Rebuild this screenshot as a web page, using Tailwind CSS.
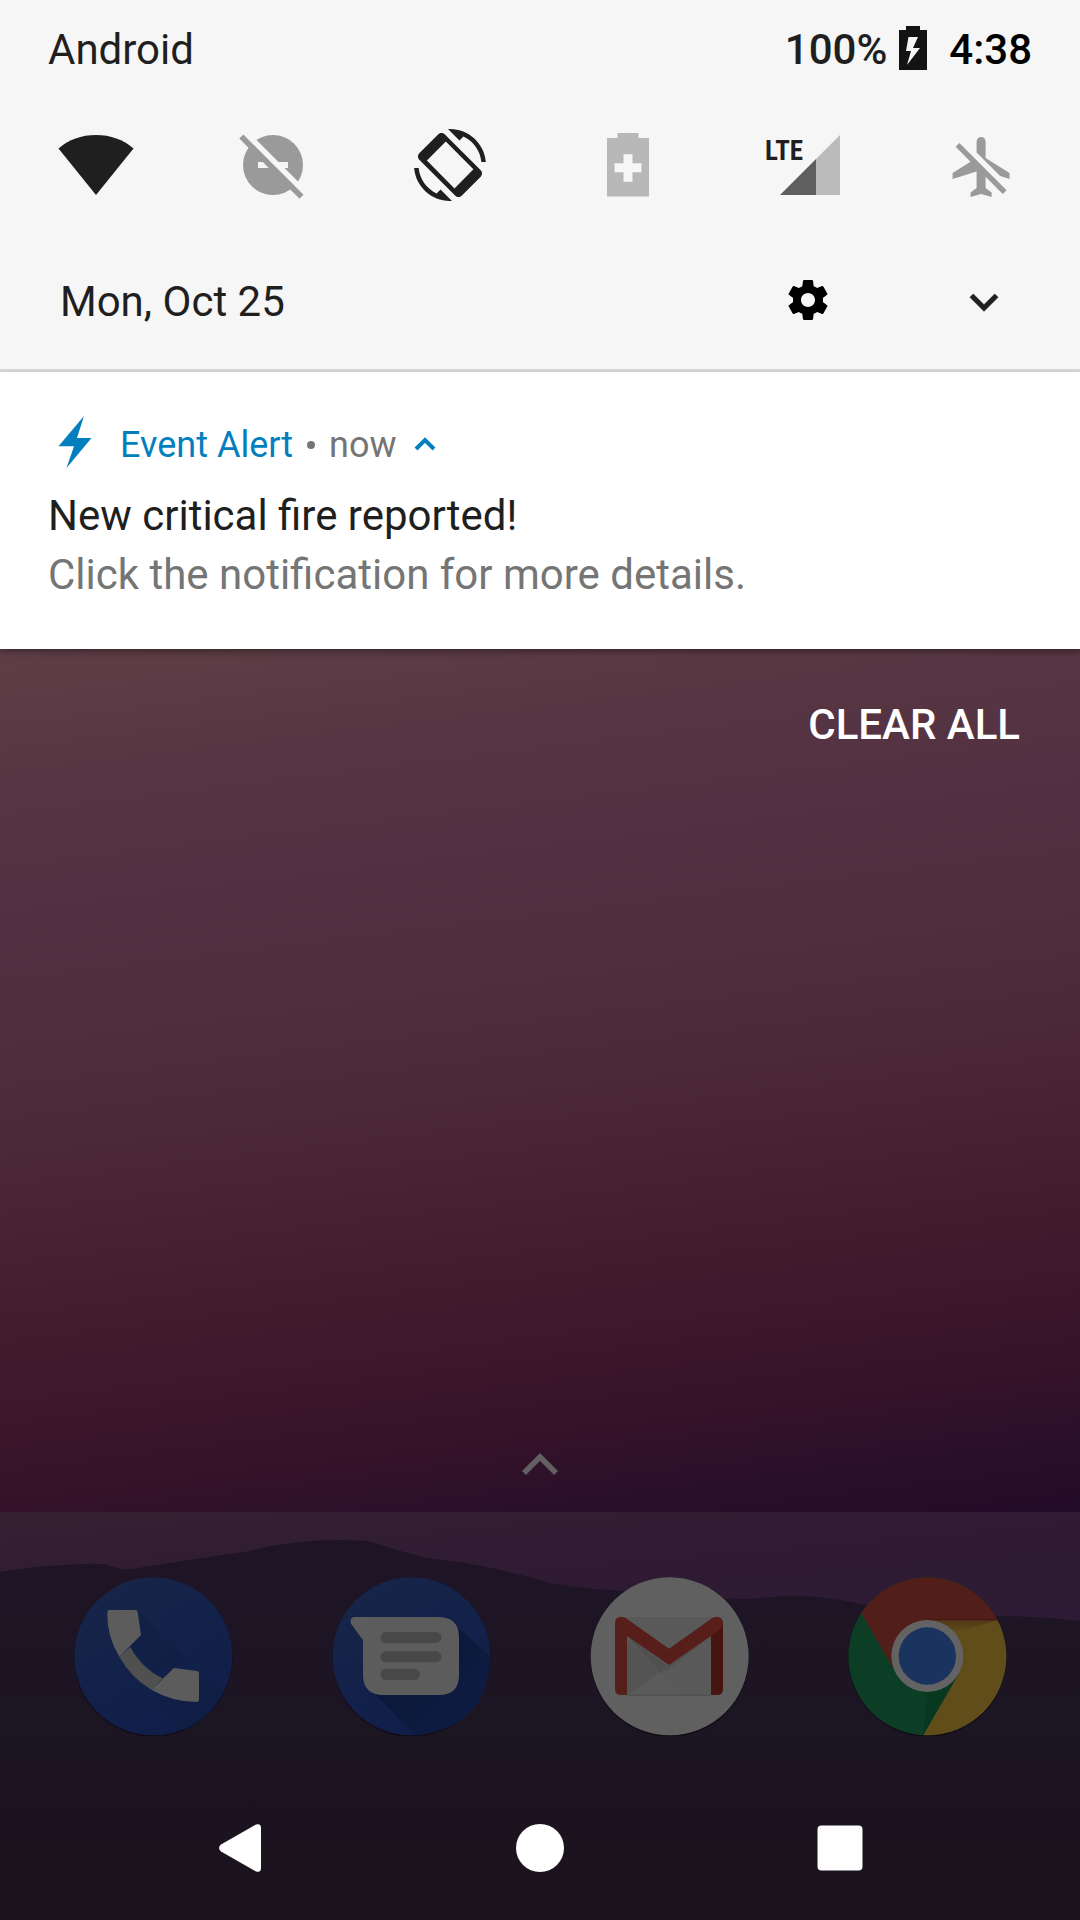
<!DOCTYPE html>
<html lang="en">
<head>
<meta charset="utf-8">
<meta name="viewport" content="width=device-width, initial-scale=1">
<title>Notification shade</title>
<script src="https://cdn.jsdelivr.net/npm/@tailwindcss/browser@4"></script>
</head>
<body class="flex min-h-screen flex-col bg-[#1b131f] font-[Roboto,sans-serif] text-[42px] leading-[48px] text-[#1f1f1f]">

  <!-- Quick settings panel -->
  <header class="border-b-3 border-[#dadada] bg-[#f6f6f6] pt-[26px] pb-[42px]">
    <div class="flex items-center justify-between px-12">
      <span>Android</span>
      <div class="flex items-center font-medium">
        <span>100%</span>
        <svg class="mr-[22px] ml-3 h-12 w-7" viewBox="899 26 28 48" aria-label="Charging">
          <path fill="#131313" d="M906 26h14v4h7v40h-28V30h7z"/>
          <path fill="#f6f6f6" d="M908.500 37h9.500L913 48h7l-13 17 4-14h-5z"/>
        </svg>
        <time class="text-black">4:38</time>
      </div>
    </div>

    <div class="mt-[55px] flex justify-between pr-[61px] pl-[58px]">
      <button type="button" aria-label="Wi-Fi">
        <svg class="h-[72px] w-[76px]" viewBox="58 129 76 72"><path fill="#1f1f1f" d="M96 195 58.500 148.500Q74 135 96 135t37.500 13.500z"/></svg>
      </button>
      <button type="button" aria-label="Do not disturb">
        <svg class="h-[72px] w-[76px]" viewBox="235 129 76 72">
          <circle cx="273" cy="165" r="30" fill="#9a9a9a"/>
          <path fill="#f6f6f6" d="M258 162h30v6h-30zM243.500 135l4-4 60 60-4 4z"/>
          <path fill="#9a9a9a" d="M239.300 138.500l4-4 60.200 60.200-4 4z"/>
        </svg>
      </button>
      <button type="button" aria-label="Auto-rotate">
        <svg class="h-[72px] w-[76px]" viewBox="0 0 24 24"><path fill="#1f1f1f" fill-rule="evenodd" d="M16.480 2.520c3.270 1.550 5.610 4.720 5.970 8.480h1.500C23.440 4.840 18.290 0 12 0l-.66.03 3.810 3.810 1.330-1.320zm-6.250-.77c-.59-.59-1.540-.59-2.120 0L1.750 8.110c-.59.59-.59 1.540 0 2.120l12.020 12.020c.59.59 1.540.59 2.120 0l6.360-6.360c.59-.59.59-1.540 0-2.120L10.230 1.750zM10.600 4.200 4.300 10.500l9.200 9.300 6.300-6.400zM7.520 21.480C4.250 19.940 1.910 16.760 1.550 13H.05C.56 19.160 5.710 24 12 24l.66-.03-3.810-3.810-1.330 1.320z"/></svg>
      </button>
      <button type="button" aria-label="Battery saver">
        <svg class="h-[72px] w-[76px]" viewBox="589 129 76 72">
          <path fill="#b8b8b8" d="M617.500 133h21v5H649v58.500h-42V138h10.500z"/>
          <path fill="#f6f6f6" d="M623.500 154.300h9v9h9v9h-9v9.400h-9v-9.400h-9v-9h9z"/>
        </svg>
      </button>
      <button type="button" aria-label="Mobile data">
        <svg class="h-[72px] w-[76px]" viewBox="766 129 76 72">
          <path fill="#bbbbbb" d="M840 135v60h-24v-36z"/>
          <path fill="#5f5f5f" d="M816 159v36h-36z"/>
          <text x="765" y="160" font-size="27" font-weight="700" font-family="'Liberation Sans Narrow','Roboto Condensed',Roboto,sans-serif" fill="#1f1f1f">LTE</text>
        </svg>
      </button>
      <button type="button" aria-label="Airplane mode">
        <svg class="h-[72px] w-[76px]" viewBox="943 129 76 72"><path transform="translate(946.600 131) scale(3)" fill="#9a9a9a" d="M13 9V3.500c0-.83-.67-1.500-1.500-1.500S10 2.670 10 3.500v3.680l7.830 7.830L21 16v-2l-8-5zM3 5.270l4.990 4.990L2 14v2l8-2.500V19l-2 1.500V22l3.500-1 3.500 1v-1.500L13 19v-3.730L18.730 21 20 19.730 4.270 4 3 5.270z"/></svg>
      </button>
    </div>

    <div class="mt-[76px] flex h-[50px] items-center pr-[68px] pl-[60px]">
      <time class="flex-1">Mon, Oct 25</time>
      <button type="button" aria-label="Settings">
        <svg class="size-12" viewBox="0 1 24 24"><path d="M19.430 12.980c.04-.32.07-.64.07-.98s-.03-.66-.07-.98l2.110-1.650c.19-.15.24-.42.12-.64l-2-3.460c-.12-.22-.39-.3-.61-.22l-2.490 1c-.52-.4-1.080-.73-1.690-.98l-.38-2.650C14.460 2.180 14.250 2 14 2h-4c-.25 0-.46.18-.49.42l-.38 2.650c-.61.25-1.170.59-1.690.98l-2.490-1c-.23-.09-.49 0-.61.22l-2 3.460c-.13.22-.07.49.12.64l2.110 1.650c-.04.32-.07.65-.07.98s.03.66.07.98l-2.110 1.650c-.19.15-.24.42-.12.64l2 3.460c.12.22.39.3.61.22l2.490-1c.52.4 1.080.73 1.690.98l.38 2.650c.03.24.24.42.49.42h4c.25 0 .46-.18.49-.42l.38-2.650c.61-.25 1.170-.59 1.690-.98l2.490 1c.23.09.49 0 .61-.22l2-3.460c.12-.22.07-.49-.12-.64l-2.110-1.650zM12 15.500c-1.930 0-3.500-1.570-3.500-3.500s1.570-3.500 3.500-3.500 3.500 1.570 3.500 3.500-1.570 3.500-3.500 3.500z"/></svg>
      </button>
      <button type="button" class="ml-[124px]" aria-label="Expand quick settings">
        <svg class="size-14" viewBox="0 0 24 24"><path fill="#1f1f1f" stroke="#1f1f1f" stroke-width=".3" d="M16.590 8.590 12 13.170 7.410 8.590 6 10l6 6 6-6z"/></svg>
      </button>
    </div>
  </header>

  <main class="flex flex-1 flex-col bg-[linear-gradient(173deg,#603f48_20%,#5c3c45_25%,#573643_32%,#533142_41%,#4f2d3d_54%,#4a2635_65%,#421d2d_75%,#3d172b_82%,#34122a_89%,#290f29_95%,#230c28_100%)]">
    <!-- Notification -->
    <article class="bg-white pt-[44px] pb-[45px] pl-12 shadow-[0_3px_6px_rgba(0,0,0,0.35)]">
      <div class="flex h-[58px] items-center text-[36px] leading-[40px] text-[#757575]">
        <svg class="ml-[10px] h-[58px] w-[34px]" viewBox="58 416 34 58" aria-hidden="true"><path fill="#047fbe" d="M84 416l-7 22h14.500l-25 30 7.500-21.700H58.500z"/></svg>
        <span class="ml-7 text-[#047fbe]">Event Alert</span>
        <span class="mx-3.5 size-2 rounded-full bg-[#757575]"></span>
        <span>now</span>
        <button type="button" class="ml-4" aria-label="Collapse notification">
          <svg class="h-6 w-6" viewBox="0 0 24 24"><path fill="none" stroke="#047fbe" stroke-width="4" d="M3 16l9-9 9 9"/></svg>
        </button>
      </div>
      <h1 class="mt-3 leading-[59px]">New critical fire reported!</h1>
      <p class="leading-[59px] text-[#757575]">Click the notification for more details.</p>
    </article>

    <button type="button" class="mt-[52px] mr-[60px] self-end font-medium text-white">CLEAR ALL</button>

    <button type="button" class="mt-auto mb-[37px] self-center" aria-label="All apps">
      <svg class="h-[22px] w-[38px]" viewBox="0 0 38 22"><path fill="none" stroke="#626060" stroke-width="5.500" d="M3 20 19 4l16 16"/></svg>
    </button>
  </main>

  <!-- Dock and navigation bar -->
  <footer class="relative bg-[linear-gradient(175deg,#352033_0%,#2e1b33_25%,#2d1a34_40%)] pt-16 pb-12">
    <svg class="absolute inset-0 h-full w-full" viewBox="0 1512 1080 408" preserveAspectRatio="none" aria-hidden="true">
      <defs><linearGradient id="hill" x2="0" y2="1"><stop stop-color="#1e1426"/><stop offset=".5" stop-color="#1c1522"/><stop offset="1" stop-color="#1a121c"/></linearGradient></defs>
      <path fill="url(#hill)" d="M0 1572Q35 1566 66 1565 90 1563 104 1564 118 1570 132 1569 180 1561 250 1551 290 1540 340 1540 365 1540 372 1542 395 1550 427 1558 455 1561 482 1566 515 1573 551 1583 585 1589 613 1590 690 1599 751 1599 785 1595 806 1596 835 1598 861 1604 940 1616 999 1616 1040 1616 1080 1621V1920H0z"/>
    </svg>

    <nav class="relative flex justify-between px-[73px]" aria-label="Dock">
      <a href="#phone" aria-label="Phone">
        <svg class="size-40" viewBox="99 108 480 480">
          <defs>
            <linearGradient id="blue" x1=".2" x2=".8" y2="1"><stop stop-color="#172549"/><stop offset="1" stop-color="#0f1e4a"/></linearGradient>
            <linearGradient id="cast" x2="1" y2="1"><stop stop-color="#0a1633"/><stop offset="1" stop-color="#0e1d46"/></linearGradient>
          </defs>
          <circle cx="340" cy="352" r="238" fill="#120c17"/>
          <circle cx="340" cy="349" r="237" fill="url(#blue)"/>
          <path fill="#0f1d42" opacity=".5" d="M295 215 440 360 402 384 345 395 272 322 303 285zM477 400 552 455Q500 560 415 573L335 448 476 484z"/>
          <path fill="#505050" d="M238 350 271 321Q305 385 368 415L334 449Q275 415 238 350z"/>
          <path fill="#5c5c5c" d="M208 210h78q6 0 7 7l10 68-65 65Q200 290 202 217q0-7 6-7zM402 384l69 9q6 1 6 7v79q0 6-6 7-73 0-137-37z"/>
        </svg>
      </a>
      <a href="#messages" aria-label="Messages">
        <svg class="size-40" viewBox="873 108 480 480">
          <circle cx="1114" cy="352" r="238" fill="#120c17"/>
          <circle cx="1114" cy="349" r="237" fill="url(#blue)"/>
          <path fill="url(#cast)" d="M1240 250 1351 350Q1345 560 1128 586L990 448z"/>
          <path fill="#5c5c5c" d="M943 231h254q60 2 60 60v114q0 60-60 60h-167q-60 0-61-60V301l-36-50q-6-17 10-20z"/>
          <path fill="none" stroke="#484848" stroke-width="33" stroke-linecap="round" d="M1038 292.500h150M1038 350.500h150M1038 403.500h85"/>
        </svg>
      </a>
      <a href="#gmail" aria-label="Gmail">
        <svg class="size-40" viewBox="87 108 480 480">
          <circle cx="329" cy="352" r="238" fill="#120c17"/>
          <circle cx="329" cy="349" r="237" fill="#606060"/>
          <path fill="#595959" d="M185 231h285v234H185z"/>
          <path fill="#505050" d="M201 288 327 380 300 398z"/>
          <path fill="#545454" d="M201 300 365 465H201z"/>
          <path fill="#5b5b5b" d="M300 396 368 465H203z"/>
          <path fill="#535353" d="M453 288 327 388 300 396 327 372z"/>
          <path fill="#4d4d4d" d="M201 464h252v3H201z"/>
          <path fill="#56201a" d="M165 250h36v215h-18q-18 0-18-18z"/>
          <path fill="#461510" d="M453 250h36v197q0 18-18 18h-18z"/>
          <path fill="#571e1a" d="M165 250q0-19 19-20 8 0 14 5l129 91 129-91q6-5 14-5 19 1 19 20 0 12-10 20L327 375 175 270q-10-8-10-20z"/>
        </svg>
      </a>
      <a href="#chrome" aria-label="Chrome">
        <svg class="size-40" viewBox="861 108 480 480">
          <defs>
            <clipPath id="disc"><circle cx="1102" cy="349" r="237"/></clipPath>
            <linearGradient id="yshade" x2="0" y2="1"><stop stop-color="#50381a"/><stop offset="1" stop-color="#604d1a"/></linearGradient>
          </defs>
          <circle cx="1102" cy="352" r="238" fill="#120c17"/>
          <g clip-path="url(#disc)">
            <path fill="#0b3e24" d="M862 109h480v480H862z"/>
            <path fill="#093820" d="M1102 455 1190 415 1089 589z"/>
            <path fill="#521e19" d="M839 109h503v131h-240v108l-99 42z"/>
            <path fill="#604d1a" d="M1102 240h240v349H1088l108-187-94-54z"/>
            <path fill="url(#yshade)" d="M1102 240h215l-135 38z"/>
            <path fill="#461714" d="M1102 237h240v4h-240z"/>
          </g>
          <circle cx="1102" cy="348" r="108" fill="#636363"/>
          <circle cx="1102" cy="348" r="86" fill="#1b335f"/>
        </svg>
      </a>
    </nav>

    <nav class="relative mt-[88px] flex justify-between px-[20%]" aria-label="System navigation">
      <button type="button" aria-label="Back"><svg class="size-12" viewBox="0 0 48 48"><path fill="#fff" d="M40 .5q5-1.500 5 3.500v40q0 5-5 3.500L5 27.500q-4-3.500 0-7z"/></svg></button>
      <button type="button" aria-label="Home" class="size-12 rounded-full bg-white"></button>
      <button type="button" aria-label="Overview"><svg class="size-12" viewBox="0 0 48 48"><rect x="1.500" y="1.500" width="45" height="45" rx="4" fill="#fff"/></svg></button>
    </nav>
  </footer>
</body>
</html>
